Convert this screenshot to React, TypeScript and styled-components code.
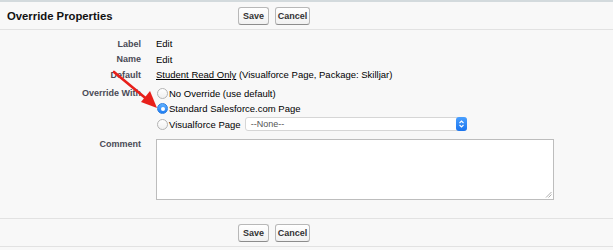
import React from "react";
import styled, { createGlobalStyle } from "styled-components";

const Global = createGlobalStyle`
  html, body { margin: 0; padding: 0; background: #f8f8f8; }
  body { font-family: "Liberation Sans", Arial, sans-serif; }
`;

const Page = styled.div`
  position: relative;
  width: 613px;
  height: 250px;
  background: #f8f8f8;
  border-top: 2px solid #d3dadd;
  box-sizing: border-box;
  overflow: hidden;
`;

const Bar = styled.div<{ $bottom?: boolean }>`
  display: flex;
  align-items: center;
  height: 27px;
  border-bottom: 1px solid #e2e2e2;
  ${(p) => (p.$bottom ? "border-top: 1px solid #e2e2e2;" : "")}
`;

const Title = styled.h2`
  margin: 0;
  width: 238px;
  padding-left: 7px;
  box-sizing: border-box;
  font-size: 11.3px;
  font-weight: bold;
  color: #111;
`;

const Buttons = styled.div<{ $offset?: number }>`
  display: flex;
  gap: 6px;
  margin-left: ${(p) => p.$offset ?? 0}px;
`;

const Button = styled.button<{ $w: number }>`
  width: ${(p) => p.$w}px;
  height: 18px;
  padding: 0;
  font-family: "Liberation Sans", Arial, sans-serif;
  font-size: 9px;
  font-weight: bold;
  color: #333;
  background: linear-gradient(#ffffff, #f1f1f1);
  border: 1px solid #b8b8b8;
  border-bottom-color: #8c8c8c;
  border-radius: 3px;
`;

const Body = styled.div`
  padding: 6px 0 18px;
  font-size: 9.5px;
`;

const Row = styled.div<{ $mt?: number }>`
  display: flex;
  align-items: center;
  min-height: 15.5px;
  margin-top: ${(p) => p.$mt ?? 0}px;
`;

const TopRow = styled(Row)`
  align-items: flex-start;
`;

const Label = styled.div<{ $pt?: number }>`
  width: 141px;
  text-align: right;
  font-size: 9px;
  font-weight: bold;
  color: #4a4a56;
  padding-top: ${(p) => p.$pt ?? 0}px;
  flex-shrink: 0;
`;

const Value = styled.div`
  margin-left: 15px;
  color: #000;
  display: flex;
  flex-direction: column;
`;

const Link = styled.span`
  text-decoration: underline;
`;

const Option = styled.label`
  display: flex;
  align-items: center;
  height: 15.5px;
  margin-left: 1px;
`;

const Radio = styled.span<{ $on?: boolean }>`
  width: 11px;
  height: 11px;
  border-radius: 50%;
  box-sizing: border-box;
  margin-right: 1px;
  display: inline-flex;
  align-items: center;
  justify-content: center;
  background: ${(p) =>
    p.$on ? "linear-gradient(#5fb0ff, #1c7cf4)" : "linear-gradient(#ffffff, #f0f0f0)"};
  border: 1px solid ${(p) => (p.$on ? "#2f7fe0" : "#b4b4b4")};
  &::after {
    content: "";
    display: ${(p) => (p.$on ? "block" : "none")};
    width: 4px;
    height: 4px;
    border-radius: 50%;
    background: #fff;
  }
`;

const Select = styled.div`
  margin-left: 4px;
  width: 222px;
  height: 14px;
  box-sizing: border-box;
  background: #fff;
  border: 1px solid #d6d6d6;
  border-radius: 3px;
  display: flex;
  align-items: center;
  justify-content: space-between;
  color: #555;
  font-size: 9px;
  padding-left: 5px;
`;

const Stepper = styled.span`
  width: 11px;
  height: 14px;
  margin-right: -1px;
  border-radius: 3px;
  background: linear-gradient(#4aa0ff, #1a74ee);
  display: flex;
  align-items: center;
  justify-content: center;
`;

const Comment = styled.div`
  position: relative;
  width: 398px;
  height: 61px;
  box-sizing: border-box;
  background: #fff;
  border: 1px solid #bdbdbd;
`;

const Grip = styled.svg`
  position: absolute;
  right: 1px;
  bottom: 1px;
`;

const Arrow = styled.svg`
  position: absolute;
  left: 0;
  top: 0;
  pointer-events: none;
`;

export default function App() {
  return (
    <>
      <Global />
      <Page>
        <Bar>
          <Title>Override Properties</Title>
          <Buttons>
            <Button $w={31}>Save</Button>
            <Button $w={35}>Cancel</Button>
          </Buttons>
        </Bar>
        <Body>
          <Row>
            <Label>Label</Label>
            <Value>Edit</Value>
          </Row>
          <Row>
            <Label>Name</Label>
            <Value>Edit</Value>
          </Row>
          <Row>
            <Label>Default</Label>
            <Value>
              <span>
                <Link>Student Read Only</Link> (Visualforce Page, Package: Skilljar)
              </span>
            </Value>
          </Row>
          <TopRow $mt={3}>
            <Label $pt={2}>Override With</Label>
            <Value>
              <Option>
                <Radio />
                No Override (use default)
              </Option>
              <Option>
                <Radio $on />
                Standard Salesforce.com Page
              </Option>
              <Option>
                <Radio />
                Visualforce Page
                <Select>
                  --None--
                  <Stepper>
                    <svg width="7" height="10" viewBox="0 0 7 10">
                      <path d="M1.5 4 L3.5 2 L5.5 4 M1.5 6 L3.5 8 L5.5 6" fill="none" stroke="#fff" strokeWidth="1.1" />
                    </svg>
                  </Stepper>
                </Select>
              </Option>
            </Value>
          </TopRow>
          <TopRow $mt={7}>
            <Label $pt={0}>Comment</Label>
            <Value>
              <Comment>
                <Grip width="7" height="7" viewBox="0 0 7 7">
                  <path d="M1 6.5 L6.5 1 M3.5 6.5 L6.5 3.5" stroke="#999" strokeWidth="0.8" />
                </Grip>
              </Comment>
            </Value>
          </TopRow>
        </Body>
        <Bar $bottom>
          <Buttons $offset={238}>
            <Button $w={31}>Save</Button>
            <Button $w={35}>Cancel</Button>
          </Buttons>
        </Bar>
        <Arrow width="613" height="250" viewBox="0 0 613 250">
          <line x1="114" y1="70" x2="149" y2="99" stroke="#e8201b" strokeWidth="2.6" strokeLinecap="round" />
          <polygon points="157,106 141,100 150,89" fill="#e8201b" />
        </Arrow>
      </Page>
    </>
  );
}
